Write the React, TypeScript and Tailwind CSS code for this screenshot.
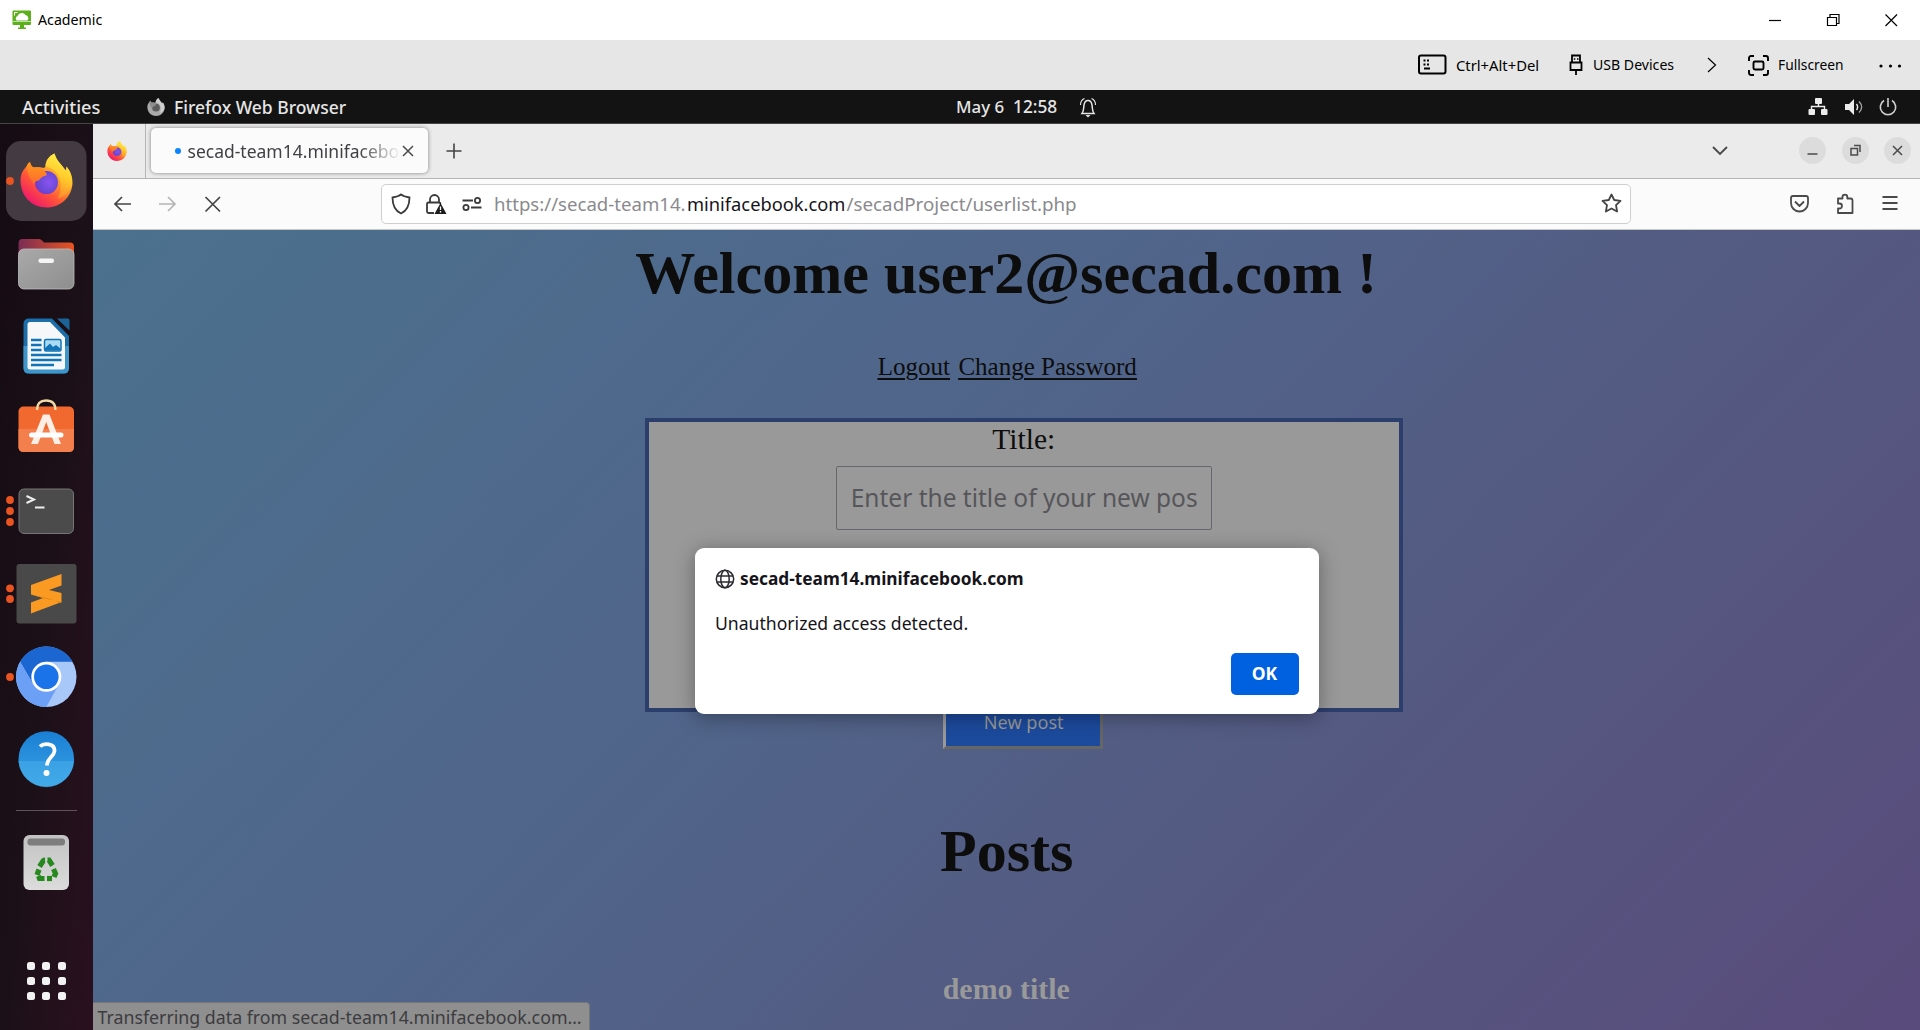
import type { ReactNode } from 'react';

function Defs() {
  return (
    <svg width="0" height="0" className="absolute" aria-hidden="true">
      <defs>
        <linearGradient id="ffBody" x1="0.85" y1="0.1" x2="0.2" y2="0.95">
          <stop offset="0" stopColor="#ffe93a" />
          <stop offset="0.35" stopColor="#ffa128" />
          <stop offset="0.65" stopColor="#ff5538" />
          <stop offset="1" stopColor="#ee1470" />
        </linearGradient>
        <linearGradient id="ffFlame" x1="0.6" y1="0" x2="0.4" y2="1">
          <stop offset="0" stopColor="#fff14a" />
          <stop offset="0.5" stopColor="#ffd02c" />
          <stop offset="1" stopColor="#ff8a2a" />
        </linearGradient>
        <linearGradient id="ffFox" x1="0" y1="0" x2="0" y2="1">
          <stop offset="0" stopColor="#ff9a1e" />
          <stop offset="1" stopColor="#ff6a2c" />
        </linearGradient>
        <radialGradient id="ffGlobe" cx="0.6" cy="0.5" r="0.65">
          <stop offset="0" stopColor="#8a52f0" />
          <stop offset="0.6" stopColor="#6b4bd8" />
          <stop offset="1" stopColor="#7a2fc4" />
        </radialGradient>
        <linearGradient id="folderBack" x1="0" y1="0" x2="1" y2="0">
          <stop offset="0" stopColor="#7a2c56" />
          <stop offset="1" stopColor="#e8541f" />
        </linearGradient>
        <linearGradient id="folderFront" x1="0" y1="0" x2="1" y2="1">
          <stop offset="0" stopColor="#a9a9a9" />
          <stop offset="1" stopColor="#8e8e8e" />
        </linearGradient>
        <linearGradient id="trashBody" x1="0" y1="0" x2="0" y2="1">
          <stop offset="0" stopColor="#c2c2c2" />
          <stop offset="1" stopColor="#dcdcdc" />
        </linearGradient>
        <linearGradient id="helpBg" x1="0" y1="0" x2="0" y2="1">
          <stop offset="0" stopColor="#1a7fd4" />
          <stop offset="1" stopColor="#3aa3e6" />
        </linearGradient>
      </defs>
    </svg>
  );
}

function FirefoxShape({ gray = false }: { gray?: boolean }) {
  return (
    <g>
      <path
        d="M1 27C1 19 5 15 7 13C8 11 9 9 10.5 8.500C11 11 12 13 14 14C16 13.500 20 13.500 22 14C23 14 25 15 26 13C26 7 30 2 35 0C36 4 38 7 41.500 11C43 13 45 15 46 17C47 15 47 14 47 13C51 18 53 23 53 30C52 44 41 54 27 54C12 54 1 42 1 27Z"
        fill={gray ? '#a9a9a9' : 'url(#ffBody)'}
      />
      <path
        d="M26 13C26 7 30 2 35 0C36 4 38 7 41.500 11C43 13 45 15 46 17C47 15 47 14 47 13C51 18 53 23 52.500 31C50 40 44 44 38 45C43 37 42 25 37 19C34 15.500 30 14 26 13Z"
        fill={gray ? '#d6d6d6' : 'url(#ffFlame)'}
        opacity="0.85"
      />
      <circle cx="27" cy="29" r="11.500" fill={gray ? '#5c5c5c' : 'url(#ffGlobe)'} />
      <path
        d="M7 13C8 11 9 9 10.500 8.500C11 11 12 13 14 14C16 13.500 20 13.500 22 14.500C24 16 25 18.500 27 19.500L27 22C24 22.500 21 24 19.500 27C17 27 15 28 15 31C12 27 8 22 7 13Z"
        fill={gray ? '#8d8d8d' : 'url(#ffFox)'}
      />
    </g>
  );
}

function TitleBar() {
  return (
    <header className="flex h-[40px] items-center bg-white pr-[22px] pl-[12px]">
      <svg width="20" height="20" viewBox="0 0 20 20">
        <rect x="0.500" y="0.500" width="18.500" height="14.500" rx="1" fill="#5bb01c" />
        <rect x="8" y="14" width="4" height="4" fill="#5bb01c" />
        <rect x="6" y="17.500" width="8" height="1.500" fill="#5bb01c" />
        <path d="M4.500 10.500a2.800 2.800 0 0 1 1-4.500a4.500 4.500 0 0 1 8-1a3.300 3.300 0 0 1 2 5.500Z" fill="#fff" />
        <path d="M2.500 5.500V2.500H5.500" stroke="#fff" strokeWidth="1" fill="none" />
        <path d="M1 11.500H19" stroke="#fff" strokeWidth="1" opacity="0.6" />
      </svg>
      <span className="ml-[6px] text-[14.2px] leading-[38px] text-black">Academic</span>
      <svg className="ml-auto" width="130" height="14" viewBox="0 0 130 14" fill="none" stroke="#000" strokeWidth="1.200">
        <path d="M1 7.500H13" />
        <path d="M59.500 4.500H68.500V12.500H59.500Z M62 4V1.500H71V10.500H69" />
        <path d="M117.500 1.500L129 13M129 1.500L117.500 13" />
      </svg>
    </header>
  );
}

function ToolBar() {
  return (
    <div className="flex h-[50px] items-center justify-end bg-[#e6e6e6] pr-[17px] text-black">
      <svg width="29" height="22" viewBox="0 0 29 22" fill="none" stroke="#000">
        <rect x="1" y="1.500" width="26.500" height="18" rx="2" strokeWidth="2" />
        <path d="M5.500 6.500h2M9 6.500h2M5.500 10.500h2M9 10.500h2M6 14.500h6" strokeWidth="1.800" />
      </svg>
      <span className="ml-[9px] w-[84px] text-[14.800px] leading-[50px] whitespace-nowrap">Ctrl+Alt+Del</span>
      <svg className="ml-[29px]" width="14" height="22" viewBox="0 0 14 22" fill="none" stroke="#000" strokeWidth="1.800">
        <path d="M3 8V1.500H11V8M1.500 8.500H12.500V16H1.500ZM7 16V21" />
        <path d="M4.800 5h1.500M8 5h1.500" strokeWidth="1.600" />
      </svg>
      <span className="ml-[10px] w-[82px] text-[14.100px] leading-[50px] whitespace-nowrap">USB Devices</span>
      <svg className="ml-[32px]" width="10" height="16" viewBox="0 0 10 16" fill="none" stroke="#000" strokeWidth="1.200">
        <path d="M1 1L8.500 8L1 15" />
      </svg>
      <svg className="ml-[31px]" width="21" height="21" viewBox="0 0 21 21" fill="none" stroke="#000" strokeWidth="1.900">
        <path d="M1 6V3a2 2 0 0 1 2-2h3M15 1h3a2 2 0 0 1 2 2v3M20 15v3a2 2 0 0 1-2 2h-3M6 20H3a2 2 0 0 1-2-2v-3" />
        <rect x="5.500" y="6.500" width="10" height="8" rx="1.500" />
      </svg>
      <span className="ml-[9px] w-[68px] text-[13.800px] leading-[50px] whitespace-nowrap">Fullscreen</span>
      <svg className="ml-[32px]" width="25" height="6" viewBox="0 0 25 6">
        <circle cx="3" cy="4" r="1.600" />
        <circle cx="12.500" cy="4" r="1.600" />
        <circle cx="21.500" cy="4" r="1.600" />
      </svg>
    </div>
  );
}

function GnomeBar() {
  return (
    <div className="grid h-[34px] grid-cols-[956px_1fr_auto] items-center border-b border-[#4a4545] bg-[#131313] text-[#e6e6e6]">
      <div className="flex items-center pl-[22px] leading-[34px] font-medium">
        <span className="w-[125px] text-[18.200px]">Activities</span>
        <svg width="18" height="18" viewBox="0 0 54 54">
          <FirefoxShape gray />
        </svg>
        <span className="ml-[9px] text-[17.500px]">Firefox Web Browser</span>
      </div>
      <div className="flex items-center leading-[32px] font-medium">
        <span className="w-[57px] text-[16.900px]">May 6</span>
        <span className="w-[66px] text-[17.300px]">12:58</span>
        <svg width="18" height="21" viewBox="0 0 18 21" fill="none" stroke="#e6e6e6" strokeWidth="1.500">
          <path d="M3 16.500C5 14 4.500 11 5 8C5.500 4.500 7 3.500 9 3.500S12.500 4.500 13 8C13.500 11 13 14 15 16.500Z" />
          <path d="M1.500 8C1.500 5 3 2.500 5.500 1.500M16.500 8C16.500 5 15 2.500 12.500 1.500" strokeWidth="1.100" />
          <path d="M6.500 18H11.500L9 20.500Z" fill="#e6e6e6" stroke="none" />
        </svg>
      </div>
      <svg className="mr-[22px]" width="90" height="20" viewBox="0 0 90 20">
        <g fill="#ececec">
          <rect x="7" y="1" width="7" height="6" rx="1" />
          <rect x="0.500" y="12" width="6.500" height="6" rx="1" />
          <rect x="13" y="12" width="6.500" height="6" rx="1" />
          <path d="M37 7H41L46 2V18L41 13H37Z" />
        </g>
        <g fill="none" stroke="#ececec" strokeWidth="1.400">
          <path d="M10.500 6V10M3.500 13V9.500H16.500V13" />
          <path d="M48.500 7C50 9 50 11 48.500 13" />
          <path d="M51 4.500C54.500 8 54.500 12 51 15.500" stroke="#a8a8a8" />
          <path d="M76 3.500A7.700 7.700 0 1 0 84 3.500M80 1V10" stroke="#d0d0d0" strokeWidth="1.600" />
        </g>
      </svg>
    </div>
  );
}

function Cell({ dots = [], children }: { dots?: number[]; children: ReactNode }) {
  return (
    <svg width="92" height="80" viewBox="0 0 92 80">
      {children}
      {dots.map((y) => (
        <circle key={y} cx="10" cy={y} r="3.900" fill="#e95420" />
      ))}
    </svg>
  );
}

function Dock() {
  return (
    <nav className="flex w-[92.500px] shrink-0 flex-col bg-linear-to-br from-[#150b12] via-[#1b1017] to-[#2a1020] pt-[17px]">
      <div className="flex flex-col gap-[2.600px]">
        <Cell dots={[40]}>
          <rect x="6" y="0" width="80.500" height="80" rx="15" fill="#433b41" />
          <g transform="translate(19.500 12.500)">
            <FirefoxShape />
          </g>
        </Cell>
        <Cell>
          <path d="M18.500 40V19q0-4 4-4H39q2 0 3 1.500L44 18.500H70q4 0 4 4V40Z" fill="url(#folderBack)" />
          <rect x="18.500" y="25" width="55.500" height="40" rx="5.500" fill="url(#folderFront)" stroke="#bdbdbd" strokeWidth="0.800" />
          <rect x="38.500" y="34.500" width="15.500" height="4.500" rx="2" fill="#f4f4f4" />
        </Cell>
        <Cell>
          <path d="M29 12.500H52L69 30V62q0 5.500-5.500 5.500H29q-5.500 0-5.500-5.500V18q0-5.500 5.500-5.500Z" fill="#1b6ea8" />
          <path d="M23.500 40H69V62q0 5.500-5.500 5.500H29q-5.500 0-5.500-5.500Z" fill="#3d95c9" />
          <path d="M57 12.500H67.500q2 0 2 2V24.500Z" fill="#1a649a" />
          <path d="M30 16H50L65 31.500V61q0 2.500-2.500 2.500H30q-2.500 0-2.500-2.500V18.500q0-2.500 2.500-2.500Z" fill="#f5f7f9" />
          <path d="M31 34h10.500M31 39h10.500M31 44h10.500M31 49h30.500M31 54h30.500M31 59h23" stroke="#1273b5" strokeWidth="2.500" />
          <rect x="44.500" y="33.500" width="16.500" height="11.500" rx="1.500" fill="#a9dbf5" stroke="#1273b5" strokeWidth="1.500" />
          <path d="M45 44.500V42L50 37.500L53 41L56 39L60.500 42.500V44.500Z" fill="#1273b5" />
        </Cell>
        <Cell>
          <rect x="18.500" y="17.500" width="55.500" height="45.500" rx="5" fill="#f2692f" />
          <path d="M18.500 40H74V58q0 5-5 5H23.500q-5 0-5-5Z" fill="#f37f4c" />
          <path d="M37 21C37 14 41 11.500 46 11.500S55.500 14 55.500 21" fill="none" stroke="#f1d9a5" strokeWidth="2.300" />
          <path d="M43 25.500h6.500L61 55h-6.500L46.200 33L38 55h-7Z" fill="#fdeee6" />
          <rect x="29" y="43.500" width="34.500" height="5" rx="2.500" fill="#fff" />
        </Cell>
        <Cell dots={[29, 40, 51]}>
          <rect x="19" y="18" width="54.500" height="44.500" rx="5" fill="#4b4b4b" stroke="#767676" strokeWidth="1" />
          <path d="M26.500 25L34 28.500L26.500 32" fill="none" stroke="#eee" strokeWidth="2" />
          <path d="M35 36.500h9.500" stroke="#eee" strokeWidth="2" />
        </Cell>
        <Cell dots={[34.3, 45]}>
          <rect x="16.500" y="10" width="60" height="59.500" rx="3" fill="#494949" />
          <path d="M31 31L61.500 20V31.500L49 36L61.500 39V48L31 59.500V48.500L43 44L31 40.500Z" fill="#fb9a22" />
          <path d="M31 40.500L43 44L52 46L61.500 48V49L50 45Z" fill="#d97d14" />
        </Cell>
        <Cell dots={[40]}>
          <circle cx="46.300" cy="39.800" r="30.200" fill="#a9c8fa" />
          <path d="M20.100 24.700A30.200 30.200 0 0 1 72.500 24.700H46L33 47Z" fill="#1b66d0" />
          <path d="M20.100 24.700A30.200 30.200 0 0 0 46.300 70L59 47L33.200 47Z" fill="#6ba0f6" />
          <circle cx="46.300" cy="39.800" r="15" fill="#fff" />
          <circle cx="46.300" cy="39.800" r="12.300" fill="#1a73e8" />
        </Cell>
        <Cell>
          <circle cx="46.300" cy="40" r="27.800" fill="url(#helpBg)" />
          <path d="M18.500 42H74A27.800 27.800 0 0 1 18.500 42Z" fill="#49b0ec" opacity="0.5" />
          <path d="M40 27.500C43.500 24 55 24 54.500 32C54 38 47 38.500 47 46.500" fill="none" stroke="#fff" strokeWidth="3.800" />
          <circle cx="46.500" cy="54" r="3" fill="#fff" />
        </Cell>
      </div>
      <div className="mx-[16px] mt-[11px] h-px bg-[#5d5359]" />
      <svg className="mt-[22px]" width="92" height="60" viewBox="0 0 92 60">
        <rect x="23.500" y="2" width="45.500" height="55" rx="6" fill="url(#trashBody)" />
        <rect x="27.500" y="5.500" width="37.500" height="7" rx="3" fill="#7d7d7d" />
        <g fill="none" stroke="#25891d" strokeWidth="5.200">
          <path d="M39.500 33.500L43.500 27.500Q44 27 45 27" />
          <path d="M47.500 27H49L52.500 32.500" />
          <path d="M53.500 36L55.500 40.500L54 44" />
          <path d="M52 45.500H47" />
          <path d="M44.500 45.500H39.500L38.500 43" />
          <path d="M37 42L39 36.500" />
        </g>
      </svg>
      <div className="mt-[69px] ml-[27px] grid w-[39px] grid-cols-3 gap-[7px]">
        {Array.from({ length: 9 }, (_, i) => (
          <span key={i} className="size-[8px] rounded-[2.500px] bg-[#f2f2f2]" />
        ))}
      </div>
    </nav>
  );
}

function TabStrip() {
  return (
    <div className="flex h-[54.500px] items-center border-b border-[#b4b4b4] bg-[#ebebeb]">
      <div className="flex h-full w-[53px] items-center justify-center border-r border-[#b4b4b4] pr-[3px]">
        <svg width="20" height="20" viewBox="0 0 54 54">
          <FirefoxShape />
        </svg>
      </div>
      <div className="ml-[5px] flex h-[45px] w-[277px] items-center rounded-[5px] bg-[#fbfbfb] pl-[24.500px] shadow-[0_0_4px_rgba(0,0,0,0.45)]">
        <span className="size-[5.500px] rounded-full bg-[#0a84ff]" />
        <span className="ml-[7px] w-[213px] mask-r-from-80% mask-r-to-100% text-[17.500px] leading-[46px] whitespace-nowrap text-[#3f3f44]">
          secad-team14.minifacebo
        </span>
        <svg className="ml-px" width="12" height="12" viewBox="0 0 12 12" stroke="#4a4a4a" strokeWidth="1.500">
          <path d="M1 1L11 11M11 1L1 11" />
        </svg>
      </div>
      <svg className="ml-[18.500px]" width="16" height="16" viewBox="0 0 16 16" stroke="#444" strokeWidth="1.600">
        <path d="M8 0.500V15.500M0.500 8H15.500" />
      </svg>
      <svg className="ml-auto" width="18" height="12" viewBox="0 0 18 12" fill="none" stroke="#4a4a4a" strokeWidth="1.900">
        <path d="M2 2L9 9L16 2" />
      </svg>
      <div className="mr-[9px] ml-[70px] flex gap-[15.500px]">
        {['M8.500 17H18.500', 'M9 11.500H15.500V18H9ZM12 8.500H18V15', 'M9 9L18 18M18 9L9 18'].map((d) => (
          <svg key={d} className="rounded-full bg-[#dcdcdc]" width="27" height="27" viewBox="0 0 27 27" fill="none" stroke="#4a4a4a" strokeWidth="1.500">
            <path d={d} />
          </svg>
        ))}
      </div>
    </div>
  );
}

function NavBar() {
  return (
    <div className="flex h-[51.500px] items-center border-b border-[#c8c8c8] bg-[#fbfbfb]">
      <svg className="ml-[20.500px]" width="110" height="20" viewBox="0 0 110 20" fill="none" stroke="#444" strokeWidth="1.700">
        <path d="M18 10H2M9 3L2 10L9 17" />
        <path d="M46 10H62M55 3L62 10L55 17" stroke="#b5b5b5" />
        <path d="M92.500 3L107 17.500M107 3L92.500 17.500" />
      </svg>
      <div className="ml-[158px] flex h-[40px] w-[1250px] items-center rounded-[5px] border-[1.500px] border-[#cfcfcf] bg-white pl-[9px]">
        <svg width="92" height="24" viewBox="0 0 92 24" fill="none" stroke="#3a3a3a" strokeWidth="1.800">
          <path d="M10 2.500C12.500 4.500 15.500 5 18.500 5.500C18.500 13 16.500 18.500 10 21.500C3.500 18.500 1.500 13 1.500 5.500C4.500 5 7.500 4.500 10 2.500Z" />
          <path d="M39 10V7.500a4.500 4.500 0 0 1 9 0V10M43 21H37.500q-1.500 0-1.500-1.500V12q0-1.500 1.500-1.500H48q1.500 0 1.500 1.500" />
          <path d="M49.500 11L55.500 22H43.500Z" fill="#1c1c1c" stroke="none" />
          <path d="M49.500 14.500V18M49.500 19V20.500" stroke="#fff" strokeWidth="1.300" />
          <path d="M71.500 8.500H82M80 15.500H90.500" />
          <circle cx="86.500" cy="8.500" r="2.600" />
          <circle cx="75" cy="15.500" r="2.600" />
        </svg>
        <div className="ml-[11px] flex leading-[38px] whitespace-nowrap text-[#8a8a8e]">
          <span className="w-[193px] text-[18.600px]">https://secad-team14.</span>
          <span className="w-[159.500px] text-[18.300px] text-[#15141a]">minifacebook.com</span>
          <span className="text-[18.800px]">/secadProject/userlist.php</span>
        </div>
        <svg className="mr-[8px] ml-auto" width="21" height="21" viewBox="0 0 21 21" fill="none" stroke="#444" strokeWidth="1.800" strokeLinejoin="round">
          <path d="M10.500 1.500L13.200 7L19.500 7.900L15 12.200L16.100 18.500L10.500 15.500L4.900 18.500L6 12.200L1.500 7.900L7.800 7Z" />
        </svg>
      </div>
      <svg className="mr-[21px] ml-auto" width="110" height="22" viewBox="0 0 110 22" fill="none" stroke="#4a4a4a" strokeWidth="1.800" strokeLinejoin="round">
        <path d="M4 3H17q2 0 2 2V10a8.500 8.500 0 0 1-17 0V5q0-2 2-2ZM6 8.500L10.500 13L15 8.500" />
        <path d="M49 5.500H53.500V4a2.400 2.400 0 0 1 4.800 0V5.500H61.500q2 0 2 2V20H49V15.500H50.500a2.400 2.400 0 0 0 0-5H49Z" />
        <path d="M93.500 4H108.500M93.500 10H108.500M93.500 16H108.500" />
      </svg>
    </div>
  );
}

function AlertDialog() {
  return (
    <div className="absolute top-[317.500px] left-[602.500px] flex h-[166.500px] w-[623.500px] flex-col rounded-[9px] bg-white px-[20px] text-[#15141a] shadow-[0_3px_20px_rgba(0,0,0,0.35)]">
      <div className="mt-[19.500px] flex h-[24px] items-center">
        <svg width="20" height="20" viewBox="0 0 20 20" fill="none" stroke="#2a2a30" strokeWidth="1.500">
          <circle cx="10" cy="10" r="8.700" />
          <ellipse cx="10" cy="10" rx="4.200" ry="8.700" />
          <path d="M2 7H18M2 13H18" />
        </svg>
        <span className="ml-[5px] text-[17.300px] leading-[24px] font-bold">secad-team14.minifacebook.com</span>
      </div>
      <p className="mt-[19.500px] text-[17.600px] leading-[24px]">Unauthorized access detected.</p>
      <button className="mt-[18px] h-[42px] w-[68px] self-end rounded-[5px] bg-[#0061e0] text-[17.500px] font-bold text-white">OK</button>
    </div>
  );
}

function WebPage() {
  return (
    <main className="relative min-h-0 flex-1 overflow-hidden bg-linear-[135deg,#4b718e_0%,#50658a_40%,#545a82_66%,#594b7b_100%]">
      <div className="flex flex-col items-center font-['Liberation_Serif',serif] text-[#0d0d0d]">
        <h1 className="mt-[9px] text-[60.100px] leading-[68px] font-bold whitespace-nowrap">Welcome user2@secad.com !</h1>
        <div className="mt-[46px] ml-[2px] flex gap-[8.500px] text-[25px] leading-[28px] underline decoration-[1.500px] underline-offset-[3px]">
          <a>Logout</a>
          <a>Change Password</a>
        </div>
        <form className="mt-[37px] ml-[35px] flex h-[294px] w-[757.500px] flex-col items-center border-[4px] border-[#2c3e6b] bg-[#999999]">
          <label className="text-[29.500px] leading-[34px]">Title:</label>
          <div className="mt-[10px] h-[64px] w-[376px] rounded-[2px] border-[1.500px] border-[#66666c] px-[14px] font-['Noto_Sans',sans-serif] text-[24.500px] leading-[61px] whitespace-nowrap text-[#56565a]">
            Enter the title of your new pos
          </div>
        </form>
        <button className="mt-[-16px] ml-[33px] h-[53px] w-[160px] border-[3px] border-t-[#999] border-r-[#666] border-b-[#666] border-l-[#999] bg-[#1c4a9c] pl-[2px] font-['Noto_Sans',sans-serif] text-[18.100px] text-[#999]">
          New post
        </button>
        <h1 className="mt-[68px] ml-px text-[60px] leading-[68px] font-bold">Posts</h1>
        <h3 className="mt-[87px] text-[29.900px] leading-[34px] font-bold text-[#999]">demo title</h3>
      </div>
      <AlertDialog />
      <div className="absolute bottom-0 left-0 h-[28px] w-[497px] rounded-tr-[4px] border-t border-r border-[#77777a] bg-[#8f8f8f] pl-[5px] text-[17.780px] leading-[28px] whitespace-nowrap text-[#3c3c40]">
        Transferring data from secad-team14.minifacebook.com…
      </div>
    </main>
  );
}

export default function App() {
  return (
    <div className="flex h-[1030px] w-[1920px] flex-col overflow-hidden font-['Noto_Sans',sans-serif]">
      <Defs />
      <TitleBar />
      <ToolBar />
      <GnomeBar />
      <div className="flex min-h-0 flex-1">
        <Dock />
        <div className="flex min-w-0 flex-1 flex-col">
          <TabStrip />
          <NavBar />
          <WebPage />
        </div>
      </div>
    </div>
  );
}
